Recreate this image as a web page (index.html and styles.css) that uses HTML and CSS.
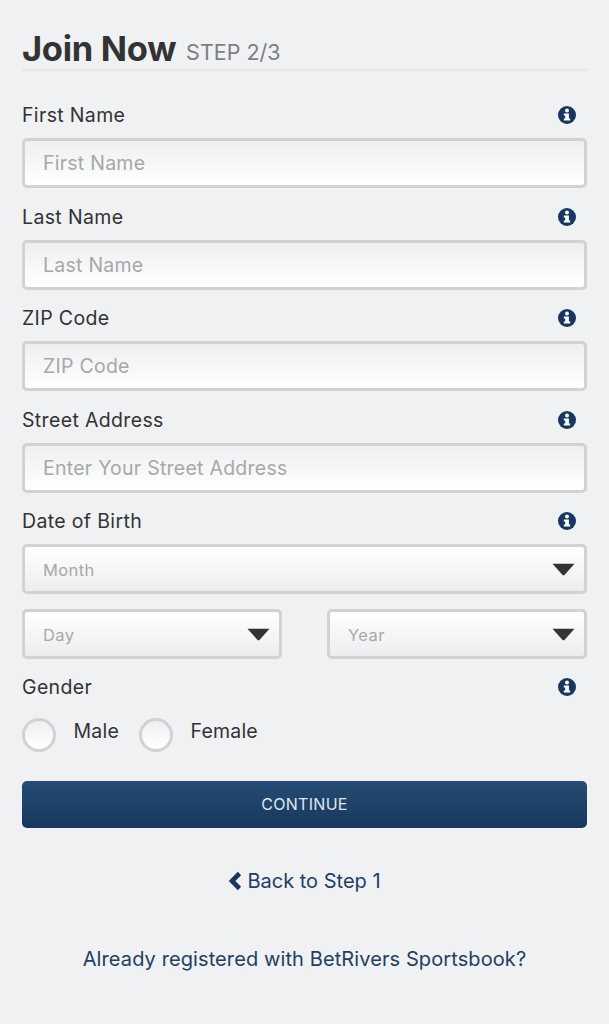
FILE: index.html
```html
<!DOCTYPE html>
<html lang="en">
<head>
<meta charset="utf-8">
<title>Join Now</title>
<link rel="stylesheet" href="styles.css">
</head>
<body>
<svg class="defs" width="0" height="0" aria-hidden="true">
  <symbol id="info" viewBox="0 0 18 18">
    <circle cx="9" cy="9" r="9" fill="#17375e"/>
    <circle cx="9" cy="4.6" r="2" fill="#fff"/>
    <path d="M5.8 7.6H10.9V12.6H12.2V14.6H5.8V12.6H7.2V9.6H5.8Z" fill="#fff"/>
  </symbol>
  <symbol id="caret" viewBox="0 0 24 13">
    <path d="M0.5 0.5H23.5L13 12.2Q12 13 11 12.2Z" fill="#333"/>
  </symbol>
</svg>
<main class="page">
  <h1 class="title">Join Now <span class="step">STEP 2/3</span></h1>

  <form class="form">
    <div class="field">
      <div class="label-row"><label class="label">First Name</label><svg class="info"><use href="#info"/></svg></div>
      <div class="input">First Name</div>
    </div>
    <div class="field">
      <div class="label-row"><label class="label">Last Name</label><svg class="info"><use href="#info"/></svg></div>
      <div class="input">Last Name</div>
    </div>
    <div class="field">
      <div class="label-row"><label class="label">ZIP Code</label><svg class="info"><use href="#info"/></svg></div>
      <div class="input">ZIP Code</div>
    </div>
    <div class="field">
      <div class="label-row"><label class="label">Street Address</label><svg class="info"><use href="#info"/></svg></div>
      <div class="input">Enter Your Street Address</div>
    </div>
    <div class="field">
      <div class="label-row"><label class="label">Date of Birth</label><svg class="info"><use href="#info"/></svg></div>
      <div class="select">Month<svg class="caret"><use href="#caret"/></svg></div>
      <div class="select-row">
        <div class="select">Day<svg class="caret"><use href="#caret"/></svg></div>
        <div class="select">Year<svg class="caret"><use href="#caret"/></svg></div>
      </div>
    </div>
    <div class="gender">
      <div class="label-row"><label class="label">Gender</label><svg class="info"><use href="#info"/></svg></div>
      <div class="radios">
        <span class="radio"></span><span class="radio-text">Male</span>
        <span class="radio"></span><span class="radio-text">Female</span>
      </div>
    </div>
    <button class="continue" type="button">CONTINUE</button>
  </form>

  <a class="back" href="#"><svg class="chevron" viewBox="0 0 14 20" aria-hidden="true"><path d="M11.5 2.5L4 10L11.5 17.5" fill="none" stroke="#17375e" stroke-width="4.6"/></svg>Back to Step 1</a>
  <a class="registered" href="#">Already registered with BetRivers Sportsbook?</a>
</main>
</body>
</html>
```
FILE: styles.css
```css
* { box-sizing: border-box; }
html, body { margin: 0; padding: 0; }
body {
  background: #eff1f3;
  font-family: Inter, "Noto Sans", sans-serif;
  color: #333;
}
.defs { position: absolute; }
.page { padding: 27px 22px 0; height: 1024px; overflow: hidden; }
.title {
  margin: 0;
  height: 44px;
  border-bottom: 2px solid #e5e7e9;
  font-size: 34.5px;
  line-height: 44px;
  font-weight: 700;
  letter-spacing: -0.3px;
  color: #333;
}
.step { font-size: 21.5px; font-weight: 400; color: #7d7f81; letter-spacing: 0; margin-left: 2px; vertical-align: 1px; }
.form { display: flex; flex-direction: column; }
.field { display: flex; flex-direction: column; }
.label-row {
  height: 24px;
  display: flex;
  justify-content: space-between;
  align-items: center;
  padding-right: 11px;
  margin-bottom: 11px;
}
.label { font-size: 19.5px; line-height: 24px; letter-spacing: 0.35px; color: #333; }
.info { width: 18px; height: 18px; }
.form > .field:first-child { margin-top: 32px; }
.field + .field { margin-top: 16.5px; }
.input, .select {
  height: 50px;
  border: 3px solid #d0d2d3;
  border-radius: 5px;
  display: flex;
  align-items: center;
  padding-left: 18px;
  color: #a6a8aa;
}
.input {
  font-size: 19.5px;
  letter-spacing: 0.25px;
  background: linear-gradient(#eeeff0, #fff);
}
.select {
  justify-content: space-between;
  padding-right: 9px;
  padding-top: 2px;
  font-size: 16.5px;
  letter-spacing: 0.4px;
  background: linear-gradient(#fff, #ecedee);
}
.caret { width: 23px; height: 13px; margin-top: -2px; }
.select-row {
  display: grid;
  grid-template-columns: 260px 260px;
  justify-content: space-between;
  margin-top: 15px;
}
.gender { margin-top: 16px; }
.gender .label-row { margin-bottom: 19px; }
.radios { display: flex; align-items: center; height: 34px; }
.radio {
  width: 34px;
  height: 34px;
  border: 3px solid #d0d2d3;
  border-radius: 50%;
  background: linear-gradient(#eeeff0, #fff);
}
.radio-text {
  font-size: 19.5px;
  letter-spacing: 0.2px;
  margin: 0 20px 8px 17.5px;
  color: #333;
}
.continue {
  margin-top: 29px;
  height: 47px;
  padding-bottom: 3px;
  border: 0;
  border-radius: 5px;
  background: linear-gradient(#264d73, #17375e);
  color: #dfe7ef;
  font: 400 16px Inter, "Noto Sans", sans-serif;
  letter-spacing: 0.3px;
}
.back, .registered {
  display: flex;
  justify-content: center;
  align-items: center;
  color: #1f3f63;
  text-decoration: none;
  font-size: 20px;
  height: 26px;
}
.back { margin-top: 40px; }
.chevron { width: 14px; height: 20px; margin-right: 5px; }
.registered { margin-top: 52px; letter-spacing: 0.1px; }
```
